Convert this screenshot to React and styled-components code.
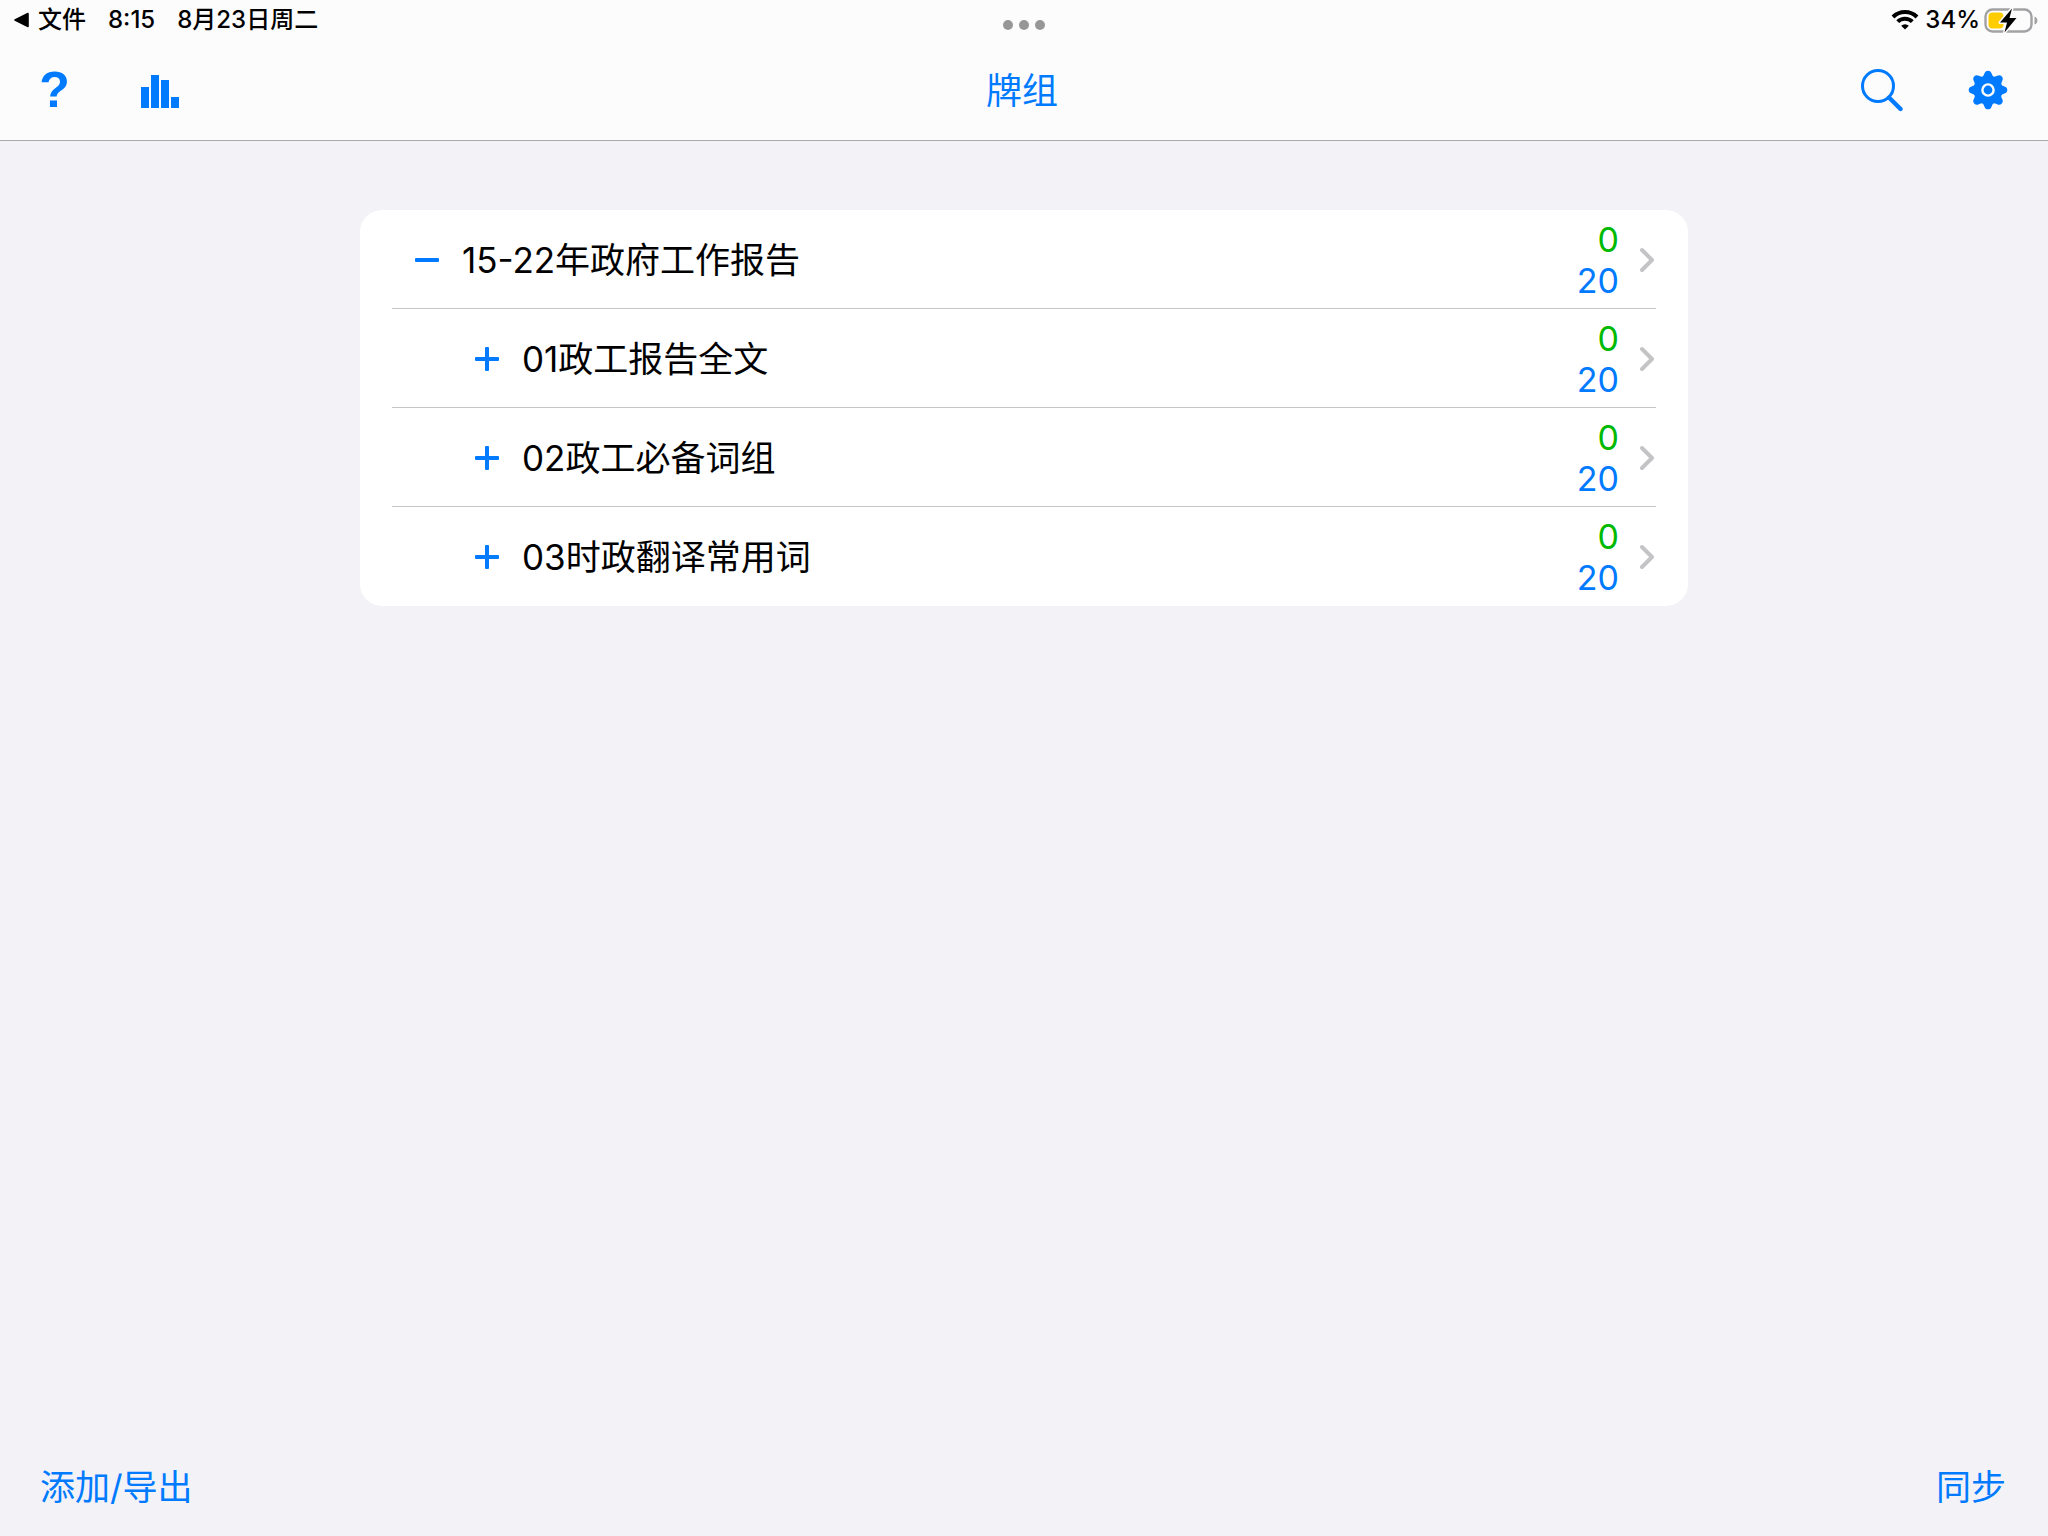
import React, { useState } from 'react'
import styled, { createGlobalStyle } from 'styled-components'

const BLUE = '#007aff'

const decks = [
	{ id: 1, title: '15-22年政府工作报告', level: 0, due: 0, fresh: 20 },
	{ id: 2, title: '01政工报告全文', level: 1, due: 0, fresh: 20 },
	{ id: 3, title: '02政工必备词组', level: 1, due: 0, fresh: 20 },
	{ id: 4, title: '03时政翻译常用词', level: 1, due: 0, fresh: 20 },
]

const teeth = [0, 45, 90, 135, 180, 225, 270, 315]

function WifiIcon() {
	return (
		<svg width="28" height="22" viewBox="0 0 28 22" aria-hidden="true">
			<g fill="none" stroke="#000" strokeWidth="4">
				<path d="M2 8 A17 17 0 0 1 26 8" />
				<path d="M6.7 12.7 A10.3 10.3 0 0 1 21.3 12.7" />
			</g>
			<path d="M14 20.6 L10.2 16.8 A5.4 5.4 0 0 1 17.8 16.8 Z" />
		</svg>
	)
}

function BatteryIcon() {
	return (
		<svg width="54" height="28" viewBox="0 0 54 28" aria-hidden="true">
			<rect
				x="1.5"
				y="3.5"
				width="46"
				height="22"
				rx="7"
				fill="none"
				stroke="#a2a2a4"
				strokeWidth="2.4"
			/>
			<path d="M50.5 10.5 Q53.4 11.5 53.4 14.5 Q53.4 17.5 50.5 18.5 Z" fill="#a2a2a4" />
			<rect x="4.5" y="6.5" width="15" height="16" rx="4" fill="#ffcc00" />
			<path
				d="M28 2.5 L16 16.5 H23 L20.5 26.5 L32.5 12 H25.5 Z"
				fill="#000"
				stroke="#fcfcfd"
				strokeWidth="3"
				strokeLinejoin="round"
				paintOrder="stroke"
			/>
		</svg>
	)
}

function BarsIcon() {
	return (
		<svg width="40" height="40" viewBox="0 0 40 40" fill={BLUE} aria-hidden="true">
			<rect x="1" y="17" width="8" height="21" />
			<rect x="11" y="5" width="8" height="33" />
			<rect x="21" y="10" width="8" height="28" />
			<rect x="31" y="27" width="8" height="11" />
		</svg>
	)
}

function SearchIcon() {
	return (
		<svg width="44" height="44" viewBox="0 0 44 44" aria-hidden="true">
			<circle cx="18" cy="18" r="15.5" fill="none" stroke={BLUE} strokeWidth="3" />
			<path d="M29 29.5 L40.5 41" stroke={BLUE} strokeWidth="4.4" strokeLinecap="round" />
		</svg>
	)
}

function GearIcon() {
	return (
		<svg width="40" height="40" viewBox="-20 -20 40 40" fill={BLUE} aria-hidden="true">
			<circle r="14" />
			{teeth.map((angle) => (
				<path
					key={angle}
					transform={`rotate(${angle})`}
					d="M-6.6 -12.2 Q-4.2 -14 -3.6 -16.4 Q-2.8 -19.3 0 -19.3 Q2.8 -19.3 3.6 -16.4 Q4.2 -14 6.6 -12.2 Z"
				/>
			))}
			<circle r="5.6" fill="none" stroke="#fcfcfd" strokeWidth="2.4" />
		</svg>
	)
}

function ToggleIcon({ open }) {
	return (
		<svg width="24" height="24" viewBox="0 0 24 24" fill={BLUE} aria-hidden="true">
			<rect y="10" width="24" height="4" rx="1" />
			{!open && <rect x="10" width="4" height="24" rx="1" />}
		</svg>
	)
}

function ChevronIcon() {
	return (
		<svg width="16" height="26" viewBox="0 0 16 26" aria-hidden="true">
			<path
				d="M2 3 L12 13 L2 23"
				fill="none"
				stroke="#c4c4c6"
				strokeWidth="4"
				strokeLinecap="round"
				strokeLinejoin="round"
			/>
		</svg>
	)
}

function App() {
	const [open, setOpen] = useState(true)
	const visible = open ? decks : decks.filter((deck) => deck.level === 0)

	return (
		<StyledPage lang="zh-CN">
			<GlobalStyle />
			<StyledHeader>
				<StyledStatusBar>
					<StyledStatusGroup>
						<StyledBackLink href="#files">
							<svg width="16" height="16" viewBox="0 0 16 16" aria-hidden="true">
								<path d="M1 8 L14 1.5 V14.5 Z" stroke="#000" strokeWidth="1.6" strokeLinejoin="round" />
							</svg>
							文件
						</StyledBackLink>
						<span>8:15</span>
						<span>8月23日周二</span>
					</StyledStatusGroup>
					<StyledDots aria-label="多任务">
						<i />
						<i />
						<i />
					</StyledDots>
					<StyledPower>
						<WifiIcon />
						<span>34%</span>
						<BatteryIcon />
					</StyledPower>
				</StyledStatusBar>
				<StyledNavBar>
					<StyledNavGroup>
						<StyledHelpButton aria-label="帮助">?</StyledHelpButton>
						<StyledIconButton aria-label="统计">
							<BarsIcon />
						</StyledIconButton>
					</StyledNavGroup>
					<StyledTitle>牌组</StyledTitle>
					<StyledNavGroup $end>
						<StyledIconButton aria-label="搜索">
							<SearchIcon />
						</StyledIconButton>
						<StyledIconButton aria-label="设置">
							<GearIcon />
						</StyledIconButton>
					</StyledNavGroup>
				</StyledNavBar>
			</StyledHeader>
			<StyledMain>
				<StyledList>
					{visible.map((deck) => {
						const isParent = deck.level === 0
						return (
							<StyledRow key={deck.id} $level={deck.level}>
								<StyledToggle
									aria-label={isParent && open ? '折叠' : '展开'}
									onClick={() => isParent && setOpen(!open)}
								>
									<ToggleIcon open={isParent && open} />
								</StyledToggle>
								<StyledDeckLink href={`#deck-${deck.id}`}>
									<StyledName>{deck.title}</StyledName>
									<StyledCounts>
										<StyledCount $color="#00b900">{deck.due}</StyledCount>
										<StyledCount $color={BLUE}>{deck.fresh}</StyledCount>
									</StyledCounts>
									<ChevronIcon />
								</StyledDeckLink>
							</StyledRow>
						)
					})}
				</StyledList>
			</StyledMain>
			<StyledFooter>
				<StyledTextButton>添加/导出</StyledTextButton>
				<StyledTextButton>同步</StyledTextButton>
			</StyledFooter>
		</StyledPage>
	)
}

const GlobalStyle = createGlobalStyle`
	* {
		box-sizing: border-box;
	}
	body {
		margin: 0;
		background-color: #f2f2f7;
		font-family: Inter, 'Noto Sans CJK SC', sans-serif;
	}
	button {
		border: none;
		padding: 0;
		background: none;
		color: inherit;
		font: inherit;
		cursor: pointer;
	}
	a {
		color: inherit;
		text-decoration: none;
	}
	svg {
		display: block;
		flex-shrink: 0;
	}
`
const StyledPage = styled.div`
	min-height: 100vh;
	display: flex;
	flex-direction: column;
	font-size: 35px;
	color: black;
`
const StyledHeader = styled.header`
	background-color: #fcfcfd;
	border-bottom: 1px solid #a9a9ae;
`
const StyledStatusBar = styled.div`
	height: 40px;
	padding: 0 10px;
	display: grid;
	grid-template-columns: 1fr auto 1fr;
	align-items: center;
	font-size: 24px;
	font-weight: 500;
	line-height: 40px;
`
const StyledStatusGroup = styled.div`
	display: flex;
	align-items: center;
	gap: 22px;
	padding-left: 4px;
`
const StyledBackLink = styled.a`
	display: flex;
	align-items: center;
	gap: 8px;
`
const StyledDots = styled.div`
	display: flex;
	gap: 6px;
	padding-top: 10px;
	i {
		width: 10px;
		height: 10px;
		border-radius: 50%;
		background-color: #979797;
	}
`
const StyledPower = styled.div`
	display: flex;
	align-items: center;
	justify-content: flex-end;
	gap: 6px;
	span {
		margin-right: -2px;
	}
`
const StyledNavBar = styled.nav`
	height: 100px;
	padding: 0 40px 0 36px;
	display: grid;
	grid-template-columns: 1fr auto 1fr;
	align-items: center;
	color: ${BLUE};
`
const StyledNavGroup = styled.div`
	display: flex;
	align-items: center;
	justify-content: ${({ $end }) => ($end ? 'flex-end' : 'flex-start')};
	gap: 64px;
`
const StyledIconButton = styled.button`
	display: flex;
	align-items: center;
	justify-content: center;
`
const StyledHelpButton = styled(StyledIconButton)`
	width: 40px;
	padding-right: 3px;
	font-family: 'Liberation Sans', sans-serif;
	font-size: 50px;
	font-weight: 700;
	line-height: 50px;
`
const StyledTitle = styled.h1`
	margin: 0;
	padding-top: 2px;
	font-size: 36px;
	font-weight: 400;
	line-height: 48px;
`
const StyledMain = styled.main`
	flex: 1;
	padding: 69px 32px;
`
const StyledList = styled.ul`
	max-width: 1328px;
	margin: 0 auto;
	padding: 0 32px;
	border-radius: 22px;
	background-color: white;
	list-style: none;
`
const StyledRow = styled.li`
	min-height: 99px;
	padding-top: 2px;
	padding-left: ${({ $level }) => 23 + $level * 60}px;
	display: flex;
	align-items: stretch;
	gap: 23px;
	border-bottom: 1px solid #c6c6c8;
	&:last-child {
		border-bottom-color: transparent;
	}
`
const StyledToggle = styled.button`
	display: flex;
	align-items: center;
`
const StyledDeckLink = styled.a`
	flex: 1;
	display: flex;
	align-items: center;
`
const StyledName = styled.span`
	flex: 1;
	line-height: 48px;
`
const StyledCounts = styled.span`
	display: flex;
	flex-direction: column;
	align-items: flex-end;
	margin-right: 21px;
`
const StyledCount = styled.span`
	font-size: 34px;
	line-height: 41px;
	color: ${({ $color }) => $color};
`
const StyledFooter = styled.footer`
	padding: 0 42px 25px 40px;
	display: flex;
	justify-content: space-between;
	color: ${BLUE};
`
const StyledTextButton = styled.button`
	line-height: 48px;
`
export default App
